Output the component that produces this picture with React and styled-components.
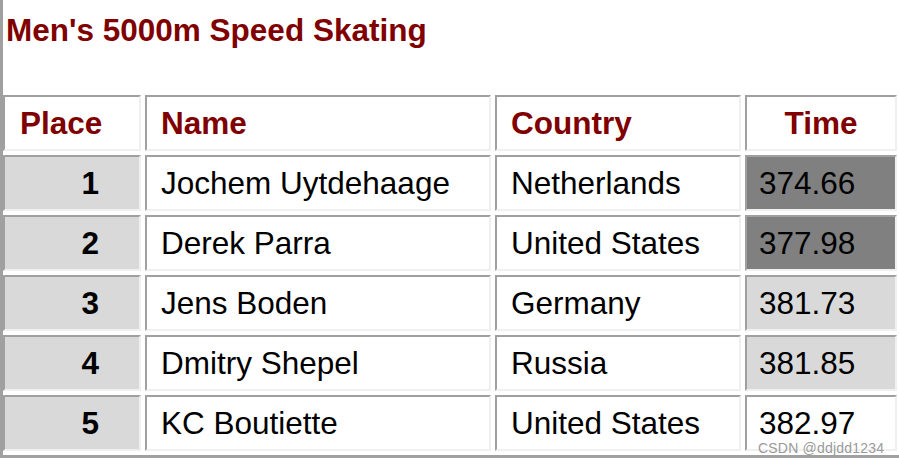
import React from 'react';
import styled, { createGlobalStyle } from 'styled-components';

const GlobalStyle = createGlobalStyle`
    html, body {
        margin: 0;
        padding: 0;
        background: #ffffff;
        overflow: hidden;
    }
    body {
        font-family: "Liberation Sans", Arial, sans-serif;
    }
`;

const Page = styled.div`
    position: relative;
    width: 899px;
    height: 465px;
`;

const Frame = styled.div`
    border-left: 3px solid #a0a0a0;
    border-bottom: 3px solid #a0a0a0;
    padding-bottom: 4px;
`;

const Title = styled.h2`
    margin: 0;
    padding: 12px 0 0 3px;
    height: 83px;
    font-size: 31.5px;
    line-height: 36px;
    font-weight: 700;
    color: #800000;
`;

const Table = styled.div`
    display: grid;
    grid-template-columns: 138px 346px 246px 152px;
    grid-auto-rows: 56px;
    column-gap: 4px;
    row-gap: 4px;
`;

const Cell = styled.div`
    display: flex;
    align-items: center;
    justify-content: ${p => p.$align === 'right' ? 'flex-end' : p.$align === 'center' ? 'center' : 'flex-start'};
    box-sizing: border-box;
    padding: ${p => p.$align === 'right' ? '0 40px 0 0' : p.$align === 'center' ? '0' : `0 0 0 ${p.$pad || 14}px`};
    border-style: solid;
    border-width: 2px;
    border-color: #a0a0a0 #f0f0f0 #f0f0f0 #a0a0a0;
    background: ${p => p.$bg || '#ffffff'};
    font-size: 31.5px;
    color: #000000;
    font-weight: ${p => p.$bold ? 700 : 400};
    white-space: nowrap;
`;

const HeadCell = styled(Cell)`
    color: #800000;
    font-weight: 700;
`;

const Watermark = styled.div`
    position: absolute;
    left: 758px;
    top: 440px;
    font-size: 14px;
    color: #9a9a9a;
    letter-spacing: 0.2px;
`;

const results = [
    { place: 1, name: 'Jochem Uytdehaage', country: 'Netherlands', time: '374.66', shade: '#808080' },
    { place: 2, name: 'Derek Parra', country: 'United States', time: '377.98', shade: '#808080' },
    { place: 3, name: 'Jens Boden', country: 'Germany', time: '381.73', shade: '#d9d9d9' },
    { place: 4, name: 'Dmitry Shepel', country: 'Russia', time: '381.85', shade: '#d9d9d9' },
    { place: 5, name: 'KC Boutiette', country: 'United States', time: '382.97', shade: '#ffffff' },
];

const App = () => {
    return (
        <Page>
            <GlobalStyle />
            <Frame>
                <Title>Men's 5000m Speed Skating</Title>
                <Table>
                    <HeadCell $pad={15}>Place</HeadCell>
                    <HeadCell>Name</HeadCell>
                    <HeadCell>Country</HeadCell>
                    <HeadCell $align="center">Time</HeadCell>
                    {results.map(r => (
                        <React.Fragment key={r.place}>
                            <Cell $align="right" $bg="#d9d9d9" $bold>{r.place}</Cell>
                            <Cell>{r.name}</Cell>
                            <Cell>{r.country}</Cell>
                            <Cell $bg={r.shade} $pad={12}>{r.time}</Cell>
                        </React.Fragment>
                    ))}
                </Table>
            </Frame>
            <Watermark>CSDN @ddjdd1234</Watermark>
        </Page>
    );
}

export default App;
